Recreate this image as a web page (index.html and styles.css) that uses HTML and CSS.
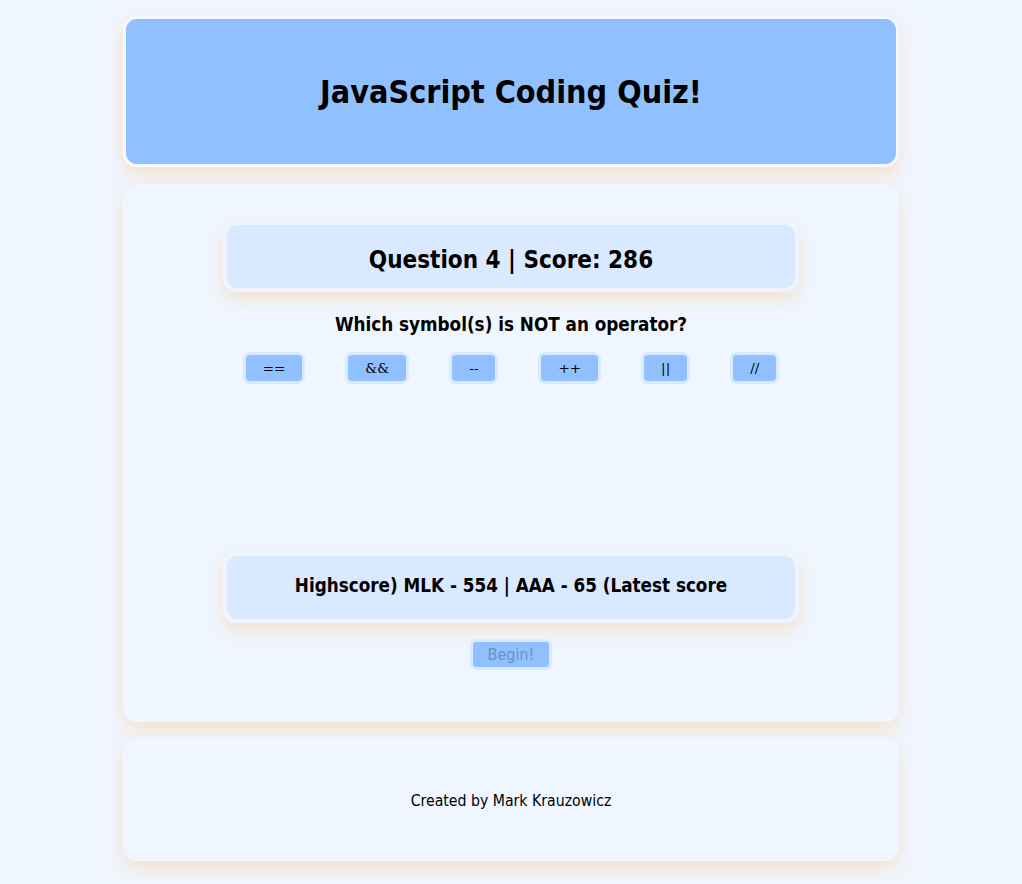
FILE: index.html
```html
<!DOCTYPE html>
<html lang="en">
<head>
<meta charset="utf-8">
<title>JavaScript Coding Quiz!</title>
<link rel="stylesheet" href="styles.css">
</head>
<body>
<div class="page">
  <header class="header">
    <h1 class="title">JavaScript Coding Quiz!</h1>
  </header>
  <main class="card">
    <div class="panel">
      <h2 class="panel-text big">Question 4 | Score: 286</h2>
    </div>
    <h3 class="question">Which symbol(s) is NOT an operator?</h3>
    <div class="answers">
      <button class="answer">==</button>
      <button class="answer">&amp;&amp;</button>
      <button class="answer">--</button>
      <button class="answer">++</button>
      <button class="answer">||</button>
      <button class="answer">//</button>
    </div>
    <div class="result"></div>
    <div class="panel">
      <h3 class="panel-text small">Highscore) MLK - 554 | AAA - 65 (Latest score</h3>
    </div>
    <div class="begin-row">
      <button class="begin" disabled>Begin!</button>
    </div>
  </main>
  <footer class="footer">
    <p class="credit">Created by Mark Krauzowicz</p>
  </footer>
</div>
</body>
</html>
```

FILE: styles.css
```css
* { box-sizing: border-box; }

body {
  margin: 0;
  background: #f0f6ff;
  font-family: "DejaVu Sans Condensed", "DejaVu Sans", sans-serif;
  color: #000;
}

.page {
  width: 776px;
  margin: 0 auto;
  padding: 16px 0 20px;
  display: flex;
  flex-direction: column;
  gap: 18px;
}

.header {
  height: 151px;
  background: #90c0ff;
  border: 3px solid #f5f9ff;
  border-radius: 14px;
  box-shadow: 0 8px 18px rgba(248, 210, 165, 0.55);
  display: flex;
  align-items: center;
  justify-content: center;
}

.title {
  margin: 0;
  font-size: 32px;
  font-weight: bold;
}

.card {
  height: 537px;
  background: #f0f6ff;
  border: 4px solid #f0f6ff;
  border-radius: 14px;
  box-shadow: 0 8px 18px rgba(248, 210, 165, 0.55);
  padding-top: 32px;
  display: flex;
  flex-direction: column;
  align-items: center;
}

.panel {
  width: 576px;
  height: 71px;
  background: #d9e9ff;
  border: 4px solid #eef5ff;
  border-radius: 14px;
  box-shadow: 0 8px 16px rgba(248, 210, 165, 0.5);
  display: flex;
  align-items: center;
  justify-content: center;
}

.panel-text {
  margin: 0;
  font-size: 18.72px;
  font-weight: bold;
}

.panel-text.big {
  font-size: 24px;
  padding-top: 6px;
}

.panel-text.small {
  padding-bottom: 4px;
}

.question {
  margin: 22px 0 0;
  font-size: 18.72px;
  font-weight: bold;
  line-height: 22px;
}

.answers {
  margin-top: 16px;
  display: flex;
  gap: 40px;
  justify-content: center;
}

.answer {
  height: 32px;
  padding: 0 17px;
  background: #90c0ff;
  border: 3px solid #d9e9ff;
  border-radius: 7px;
  font-family: "DejaVu Serif", serif;
  font-size: 13.5px;
  color: #000;
}

.result {
  height: 168px;
}

.begin-row {
  margin-top: 16px;
}

.begin {
  width: 82px;
  height: 31px;
  background: #90c0ff;
  border: 3px solid #d9e9ff;
  border-radius: 6px;
  font-family: "DejaVu Sans Condensed", "DejaVu Sans", sans-serif;
  font-size: 16px;
  color: #7090c0;
  padding: 0;
}

.footer {
  height: 124px;
  margin-top: -3px;
  padding-top: 3px;
  background: #f0f6ff;
  border-radius: 14px;
  box-shadow: 0 8px 18px rgba(248, 210, 165, 0.55);
  display: flex;
  align-items: center;
  justify-content: center;
}

.credit {
  margin: 0;
  font-size: 15.7px;
}
```
